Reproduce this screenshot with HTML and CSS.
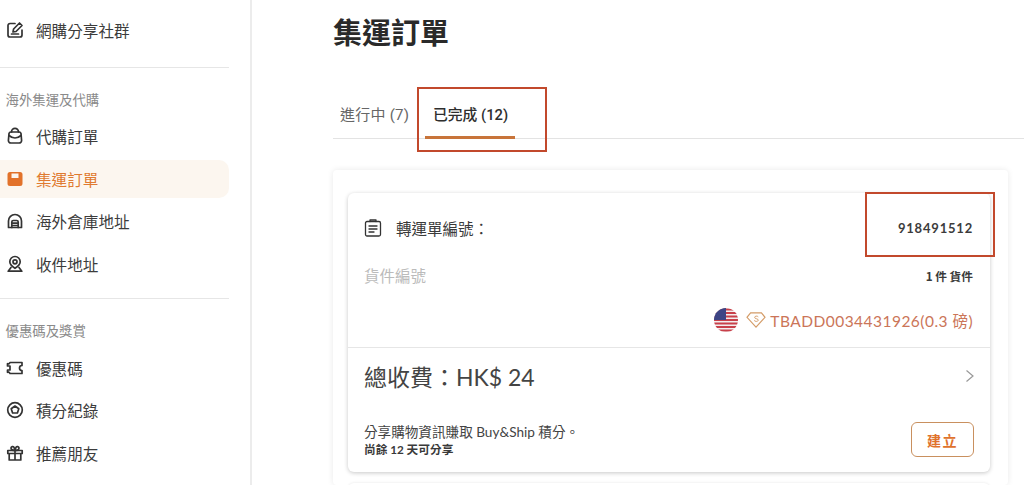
FILE: index.html
```html
<!DOCTYPE html>
<html lang="zh-Hant">
<head>
  <meta charset="UTF-8">
  <title>集運訂單</title>
  <link rel="stylesheet" href="styles.css">
</head>
<body>
  <div class="page">
    <aside class="sidebar">
      <div class="group group-first">
        <a class="nav-item">
          <svg class="icon" viewBox="0 0 18 18"><path d="M9 2.500H4a2 2 0 0 0-2 2v9.500a2 2 0 0 0 2 2h10a2 2 0 0 0 2-2V9"/><path d="M7 11l.6-3L13.500 2l2.500 2.500L10 10.500z"/><path d="M5.500 13h7"/></svg>
          <span>網購分享社群</span>
        </a>
      </div>
      <div class="group">
        <div class="group-label">海外集運及代購</div>
        <a class="nav-item">
          <svg class="icon" viewBox="0 0 18 18"><path d="M3 6.500A2 2 0 0 1 5 5h8a2 2 0 0 1 2 1.500l.6 7A2.500 2.500 0 0 1 13 16H5a2.500 2.500 0 0 1-2.600-2.500z"/><path d="M5.500 5V4.800a3.500 3.500 0 0 1 7 0V5"/><path d="M3 8.500c2 1.700 4 2.500 6 2.500s4-.8 6-2.500"/></svg>
          <span>代購訂單</span>
        </a>
        <a class="nav-item active">
          <svg class="icon" viewBox="0 0 18 18"><path class="solid" d="M4 2h10a2.500 2.500 0 0 1 2.500 2.500v9A2.500 2.500 0 0 1 14 16H4a2.500 2.500 0 0 1-2.500-2.500v-9A2.500 2.500 0 0 1 4 2z"/><path class="cut" d="M5.500 3.500h7v4.500h-7z"/></svg>
          <span>集運訂單</span>
        </a>
        <a class="nav-item">
          <svg class="icon" viewBox="0 0 18 18"><path d="M2.500 15.500V9a6.500 6.500 0 0 1 13 0v6.500z"/><path d="M5.800 15.500V10a1.500 1.500 0 0 1 1.500-1.500h3.400a1.500 1.500 0 0 1 1.500 1.500v5.500"/><path d="M6 11.200h6M6 13.500h6"/></svg>
          <span>海外倉庫地址</span>
        </a>
        <a class="nav-item">
          <svg class="icon" viewBox="0 0 18 18"><path d="M9 1.500a5.200 5.200 0 0 1 5.200 5.200c0 2.700-2.700 5-5.200 6.600-2.500-1.600-5.200-3.900-5.200-6.600A5.200 5.200 0 0 1 9 1.500z"/><circle cx="9" cy="6.800" r="2"/><path d="M5 12.500l-2.800 3.700h13.600L13 12.500"/></svg>
          <span>收件地址</span>
        </a>
      </div>
      <div class="group">
        <div class="group-label">優惠碼及獎賞</div>
        <a class="nav-item">
          <svg class="icon" viewBox="0 0 18 18"><path d="M4 3.500h12v3a2.500 2.500 0 0 0 0 5v3H4a2 2 0 0 0-2.500-1.200v-2.300H4V7H1.500V4.700A2 2 0 0 0 4 3.500z"/></svg>
          <span>優惠碼</span>
        </a>
        <a class="nav-item">
          <svg class="icon" viewBox="0 0 18 18"><circle cx="9" cy="9" r="7.300"/><path d="M9 5l3.800 2.800-1.400 4.200H6.600L5.200 7.800z"/></svg>
          <span>積分紀錄</span>
        </a>
        <a class="nav-item">
          <svg class="icon" viewBox="0 0 18 18"><path d="M1.800 6.500h14.400v3H1.800zM3.200 9.500V16h11.600V9.500M9 6.500V16"/><path d="M9 6.500C7 6.500 5 5.500 5 4a1.700 1.700 0 0 1 3-.8zM9 6.500c2 0 4-1 4-2.500a1.700 1.700 0 0 0-3-.8z"/></svg>
          <span>推薦朋友</span>
        </a>
      </div>
    </aside>

    <main class="main">
      <h1 class="title">集運訂單</h1>
      <div class="tabs">
        <div class="tab">進行中 (7)</div>
        <div class="tab tab-on">已完成 (12)</div>
      </div>

      <section class="panel">
        <article class="card">
          <div class="card-top">
            <div class="row row-order">
              <div class="order-label">
                <svg class="icon icon-order" viewBox="0 0 18 18"><rect x="1.500" y="2.500" width="15" height="14.500" rx="1.500"/><path d="M6 2.500V1h6v1.500"/><path d="M5 7h8M5 10h8M5 13h5"/></svg>
                <span>轉運單編號：</span>
              </div>
              <div class="order-no">918491512</div>
            </div>
            <div class="row row-sub">
              <div class="sub-label">貨件編號</div>
              <div class="count">1 件 貨件</div>
            </div>
            <div class="parcel">
              <svg class="flag" viewBox="0 0 24 24">
                <defs><clipPath id="round"><circle cx="12" cy="12" r="12"/></clipPath></defs>
                <g clip-path="url(#round)">
                  <rect width="24" height="24" fill="#f3eeee"/>
                  <path d="M0 1.500h24M0 5h24M0 8.500h24M0 12h24M0 15.500h24M0 19h24M0 22.500h24" stroke="#c8404a" stroke-width="1.800"/>
                  <rect width="12" height="12" fill="#3d4585"/>
                </g>
              </svg>
              <svg class="gem" viewBox="0 0 22 20"><path d="M5 2h12l4 5-10 11L1 7z"/><path class="gem-s" d="M13.500 6.500c-.5-1-3.800-1.300-4 .5-.2 2 4.300 1.200 4 3.300-.3 1.800-3.800 1.500-4.500.2"/></svg>
              <span class="parcel-code">TBADD0034431926(0.3 磅)</span>
            </div>
          </div>
          <div class="card-bottom">
            <div class="row fee-row">
              <div class="fee">總收費：HK$ 24</div>
              <svg class="chevron" viewBox="0 0 10 14"><path d="M1.500 1.500L8 7l-6.500 5.500"/></svg>
            </div>
            <div class="row share-row">
              <div class="share">
                <div class="share-main">分享購物資訊賺取 Buy&amp;Ship 積分。</div>
                <div class="share-left">尚餘 12 天可分享</div>
              </div>
              <button class="create-btn">建立</button>
            </div>
          </div>
        </article>
        <div class="card next-card"></div>
      </section>

      <div class="mark mark-tab"></div>
      <div class="mark mark-order"></div>
    </main>
  </div>
</body>
</html>
```

FILE: styles.css
```css
* { box-sizing: border-box; }
html, body { margin: 0; height: 100%; overflow: hidden; background: #fff; }
body {
  font-family: "Noto Sans CJK TC", "Noto Sans", sans-serif;
  color: #333;
}
.page { display: flex; height: 485px; overflow: hidden; }

/* sidebar */
.sidebar {
  flex: none;
  width: 252px;
  height: 100%;
  padding-right: 21px;
  border-right: 2px solid #ececec;
}
.group { border-top: 1px solid #e6e6e6; padding: 19px 0 11px; }
.group-first { border-top: 0; padding: 11px 0 13px; }
.group-label {
  padding-left: 5.500px;
  height: 30.500px;
  line-height: 25px;
  font-size: 13.400px;
  color: #8a8a8a;
}
.nav-item {
  display: flex;
  align-items: center;
  gap: 12.500px;
  height: 38px;
  margin-bottom: 4.500px;
  padding-left: 5.500px;
  border-radius: 0 10px 10px 0;
  font-size: 15.600px;
  color: #3c3c3c;
}
.nav-item.active { background: #fcf6ef; color: #e07a30; }
.icon {
  flex: none;
  width: 18px;
  height: 18px;
  fill: none;
  stroke: #333;
  stroke-width: 1.700;
  stroke-linejoin: round;
  stroke-linecap: round;
}
.active .solid { fill: #e2722a; stroke: none; }
.active .cut { fill: #fcf6ef; stroke: none; }

/* main */
.main { position: relative; flex: 1; min-width: 0; }
.title {
  margin: 11px 0 0 81px;
  font-size: 29px;
  line-height: 40px;
  font-weight: 700;
  color: #2a2a2a;
}
.tabs {
  display: flex;
  margin: 36px 0 0 81px;
  height: 52px;
  border-bottom: 1px solid #e3e3e3;
}
.tab {
  width: 92px;
  padding: 0 0 0 7px;
  line-height: 56px;
  font-size: 15px;
  letter-spacing: 0.25px;
  color: #666;
  font-family: Roboto, "Noto Sans CJK TC", sans-serif;
}
.tab-on {
  position: relative;
  font-weight: 500;
  font-size: 14.800px;
  letter-spacing: 0;
  color: #2e2e2e;
  padding-left: 8px;
}
.tab-on::after {
  content: "";
  position: absolute;
  left: 0;
  right: 2px;
  bottom: -1px;
  height: 3px;
  background: #c8743a;
}
.panel {
  margin: 31px 16px 0 81px;
  padding: 23px 18px 0 15px;
  height: 315px;
  overflow: hidden;
  border-radius: 4px;
  box-shadow: 0 0 6px rgba(0, 0, 0, 0.09);
}
.card {
  border-radius: 6px;
  background: #fff;
  box-shadow: 0 1px 4px rgba(0, 0, 0, 0.22);
}
.next-card { height: 60px; margin-top: 11px; box-shadow: 0 0 3px rgba(0, 0, 0, 0.1); }
.card-top { height: 155px; padding: 0 17px 0 16px; border-bottom: 1px solid #e6e6e6; }
.row { display: flex; align-items: center; justify-content: space-between; }
.row-order { height: 70px; }
.order-label { display: flex; align-items: center; gap: 14px; font-size: 15.500px; color: #3a3a3a; }
.icon-order { width: 18px; height: 18px; stroke-width: 1.300; }
.order-no {
  position: relative;
  z-index: 1;
  font-family: Lato, sans-serif;
  font-size: 13px;
  font-weight: 700;
  letter-spacing: 0.8px;
  color: #3c3c3c;
}
.row-sub { height: 24px; }
.sub-label { font-size: 15.500px; color: #bbb; }
.count { font-size: 11.700px; font-weight: 700; color: #3a3a3a; }
.parcel { display: flex; align-items: center; justify-content: flex-end; margin-top: 21px; height: 24px; }
.flag { width: 24px; height: 24px; margin-right: 8px; }
.gem { width: 20px; height: 18px; margin-right: 4px; fill: none; stroke: #d49c68; stroke-width: 1.300; }
.gem-s { stroke-width: 1.100; }
.parcel-code { font-family: Lato, "Noto Sans CJK TC", sans-serif; font-size: 15.500px; letter-spacing: 0.47px; color: #cb7558; }
.card-bottom { padding: 0 16px 15px 16px; }
.fee-row { height: 60px; padding-bottom: 4px; }
.fee { font-family: Lato, "Noto Sans CJK TC", sans-serif; font-size: 23px; color: #444; }
.chevron { width: 10px; height: 14px; margin-right: -1px; fill: none; stroke: #999; stroke-width: 1.200; }
.share-row { margin-top: 14px; }
.share-main { font-family: Lato, "Noto Sans CJK TC", sans-serif; font-size: 13.600px; line-height: 18px; color: #444; }
.share-left { font-family: Lato, "Noto Sans CJK TC", sans-serif; font-size: 11.700px; line-height: 16px; font-weight: 700; color: #3a3a3a; }
.create-btn {
  width: 63px;
  height: 35px;
  padding: 0;
  border: 1px solid #c9905f;
  border-radius: 6px;
  background: #fff;
  font: 700 14px "Noto Sans CJK TC", sans-serif;
  letter-spacing: 1.500px;
  color: #e0722c;
}

/* red annotation boxes drawn on top of the shot */
.mark { position: absolute; border: 2px solid #c2492c; }
.mark-tab { left: 165px; top: 87px; width: 130px; height: 65px; }
.mark-order { left: 613px; top: 192px; width: 130px; height: 65px; }
```
